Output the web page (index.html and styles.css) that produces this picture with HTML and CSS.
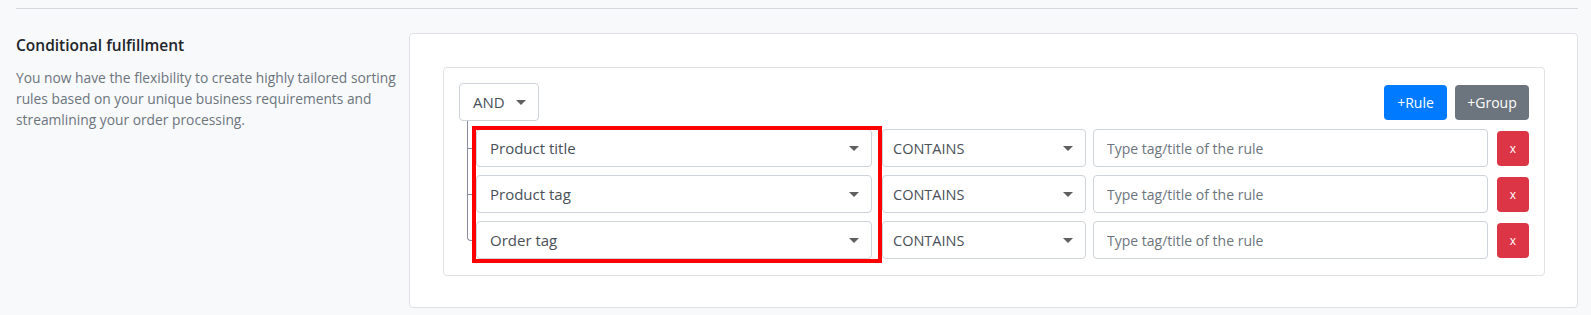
FILE: index.html
```html
<!DOCTYPE html>
<html>
    <head>
        <meta charset="utf-8">
        <title>Conditional fulfillment</title>
        <meta name="viewport" content="width=device-width, initial-scale=1">
        <link rel="stylesheet" href="styles.css">
    </head>
    <body>
        <div class="section">
            <hr class="divider">
            <div class="settingRow">
                <div class="intro">
                    <h3 class="introTitle">Conditional fulfillment</h3>
                    <p class="introText">You now have the flexibility to create highly tailored sorting rules based on your unique business requirements and streamlining your order processing.</p>
                </div>

                <div class="card">
                    <div class="ruleGroup">
                        <div class="groupHeader">
                            <div class="select combinator">AND</div>
                            <div class="groupActions">
                                <button class="btn btnBlue">+Rule</button>
                                <button class="btn btnGray">+Group</button>
                            </div>
                        </div>

                        <div class="rules">
                            <div class="highlight"></div>
                            <div class="rule">
                                <div class="select field">Product title</div>
                                <div class="select operator">CONTAINS</div>
                                <input class="valueInput" type="text" placeholder="Type tag/title of the rule">
                                <button class="btn btnRed removeBtn">x</button>
                            </div>
                            <div class="rule">
                                <div class="select field">Product tag</div>
                                <div class="select operator">CONTAINS</div>
                                <input class="valueInput" type="text" placeholder="Type tag/title of the rule">
                                <button class="btn btnRed removeBtn">x</button>
                            </div>
                            <div class="rule">
                                <div class="select field">Order tag</div>
                                <div class="select operator">CONTAINS</div>
                                <input class="valueInput" type="text" placeholder="Type tag/title of the rule">
                                <button class="btn btnRed removeBtn">x</button>
                            </div>
                        </div>
                    </div>
                </div>
            </div>
        </div>
    </body>
</html>
```

FILE: styles.css
```css
* {
    margin: 0;
    padding: 0;
    box-sizing: border-box;
}

body {
    background-color: #f8f9fb;
    font-family: 'Open Sans', sans-serif;
    color: #212529;
    overflow: hidden;
}

.section {
    padding: 8px 13px 0 16px;
}

.divider {
    border: none;
    border-top: 1px solid #d6d8db;
}

.settingRow {
    margin-top: 24px;
    display: flex;
    flex-flow: row nowrap;
    align-items: flex-start;
}

.intro {
    width: 381px;
    margin-right: 12px;
    padding-top: 1px;
}
.introTitle {
    font-size: 15.5px;
    font-weight: 600;
    line-height: 22px;
    color: #212529;
}
.introText {
    margin-top: 11px;
    font-size: 13.8px;
    line-height: 21px;
    color: #6c757d;
}

.card {
    flex: 1;
    background-color: white;
    border: 1px solid #dfe1e4;
    border-radius: 4px;
    padding: 33px 32px 31px 33px;
}

.ruleGroup {
    border: 1px solid #dfe1e4;
    border-radius: 4px;
    padding: 15px 15px 16px 15px;
}

.groupHeader {
    display: flex;
    flex-flow: row nowrap;
    justify-content: space-between;
    align-items: center;
}
.groupActions {
    display: flex;
    gap: 8px;
}

.select {
    position: relative;
    height: 38px;
    padding: 0 30px 0 12px;
    display: flex;
    align-items: center;
    font-size: 15px;
    color: #495057;
    background-color: white;
    border: 1px solid #ced4da;
    border-radius: 4px;
}
.select::after {
    content: '';
    position: absolute;
    right: 12px;
    top: 16px;
    border-left: 5px solid transparent;
    border-right: 5px solid transparent;
    border-top: 5px solid #5f5f5f;
}
.combinator {
    width: 80px;
    padding-left: 13px;
}

.btn {
    height: 35px;
    border: none;
    border-radius: 4px;
    font-family: 'Open Sans', sans-serif;
    font-size: 14px;
    color: white;
}
.btnBlue {
    width: 63px;
    background-color: #007bff;
}
.btnGray {
    width: 74px;
    background-color: #6c757d;
}
.btnRed {
    background-color: #dc3545;
}

.rules {
    position: relative;
    margin-left: 8px;
    padding-left: 9px;
}

.rule {
    position: relative;
    margin-top: 8px;
    display: flex;
    flex-flow: row nowrap;
    align-items: center;
}
.rule::before {
    content: '';
    position: absolute;
    left: -9px;
    top: -8px;
    width: 9px;
    height: calc(50% + 8px);
    border-left: 1px solid #8a8aa3;
    border-bottom: 1px solid #8a8aa3;
}
.rule::after {
    content: '';
    position: absolute;
    left: -9px;
    top: 50%;
    height: 50%;
    border-left: 1px solid #8a8aa3;
}
.rule:last-child::before {
    border-bottom-left-radius: 4px;
}
.rule:last-child::after {
    display: none;
}

.field {
    width: 396px;
    padding-left: 13px;
}
.operator {
    width: 204px;
    margin-left: 10px;
    padding-left: 10px;
    font-size: 14.5px;
}

.valueInput {
    flex: 1;
    height: 38px;
    margin-left: 7px;
    padding: 0 13px;
    font-family: 'Open Sans', sans-serif;
    font-size: 14px;
    color: #495057;
    border: 1px solid #ced4da;
    border-radius: 4px;
}
.valueInput::placeholder {
    color: #6c757d;
}

.removeBtn {
    width: 32px;
    margin-left: 9px;
    font-size: 12px;
}

.highlight {
    position: absolute;
    z-index: 1;
    left: 5px;
    top: -3px;
    width: 410px;
    height: 137px;
    border: 4px solid #ff0000;
    pointer-events: none;
}
```
